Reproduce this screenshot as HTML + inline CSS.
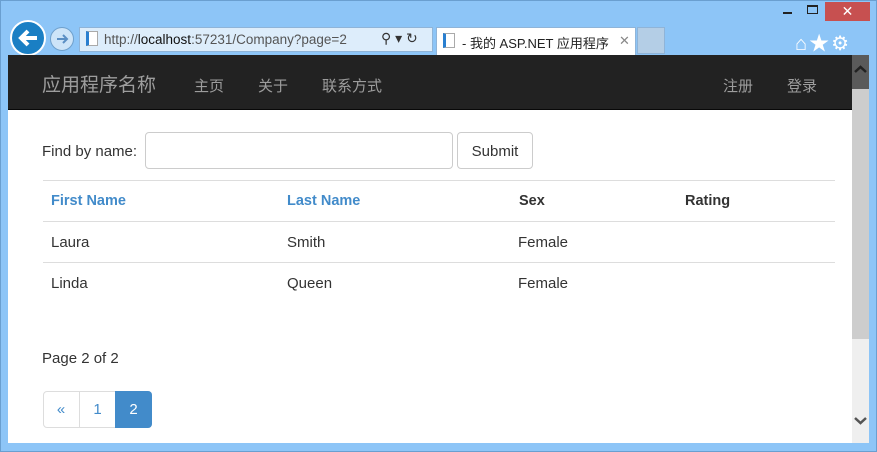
<!DOCTYPE html>
<html><head><meta charset="utf-8"><style>
*{margin:0;padding:0;box-sizing:border-box}
body{width:877px;height:452px;background:#8dc5f7;position:relative;overflow:hidden;font-family:"Liberation Sans","Noto Sans CJK SC",sans-serif;font-size:15px;color:#333}
.a{position:absolute}
.cn{font-family:"Liberation Sans","Noto Sans CJK SC","Microsoft YaHei",sans-serif}
</style></head><body>
<div class="a" style="left:0;top:0;width:877px;height:452px;border:1px solid #6a9fd0"></div>
<div class="a" style="left:783px;top:12px;width:9px;height:2px;background:#222"></div>
<div class="a" style="left:807px;top:5px;width:11px;height:9px;border:1px solid #222;border-top-width:2px"></div>
<div class="a" style="left:825px;top:2px;width:45px;height:19px;background:#c75050;color:#fff;text-align:center;font-size:14px;line-height:19px">✕</div>
<div class="a" style="left:10px;top:20px;width:36px;height:36px;border-radius:50%;background:#1a7fc4;border:2px solid #fff"></div>
<svg class="a" style="left:10px;top:20px" width="36" height="36"><path d="M27 18H11M18 11l-7 7 7 7" stroke="#fff" stroke-width="4" fill="none"/></svg>
<div class="a" style="left:50px;top:27px;width:24px;height:24px;border-radius:50%;border:1px solid #6fa0cc;background:#cde4f8"></div>
<svg class="a" style="left:50px;top:27px" width="24" height="24"><path d="M7 12h10M13 8l4 4-4 4" stroke="#5b8fc4" stroke-width="2" fill="none"/></svg>
<div class="a" style="left:79px;top:27px;width:354px;height:25px;background:#ddedfb;border:1px solid #8fb4d8"></div>
<div class="a" style="left:86px;top:31px;width:12px;height:15px;background:#fff;border:1px solid #aaa;border-left:3px solid #2a7fd0"></div>
<div class="a" style="left:104px;top:32px;font-size:13.5px;color:#555">http://<span style="color:#111">localhost</span>:57231/Company?page=2</div>
<div class="a" style="left:381px;top:30px;font-size:14px;color:#333">⚲ ▾ ↻</div>
<div class="a" style="left:436px;top:27px;width:200px;height:28px;background:#fff;border:1px solid #8fb4d8;border-bottom:none"></div>
<div class="a" style="left:443px;top:33px;width:12px;height:15px;background:#fff;border:1px solid #aaa;border-left:3px solid #2a7fd0"></div>
<div class="a cn" style="left:462px;top:33px;font-size:13px;color:#222">- 我的 ASP.NET 应用程序</div>
<div class="a" style="left:619px;top:33px;font-size:13px;color:#888">✕</div>
<div class="a" style="left:637px;top:27px;width:28px;height:27px;background:#b4cee6;border:1px solid #8fb4d8"></div>
<div class="a" style="left:795px;top:27px;font-size:20px;color:#fff;letter-spacing:2px">⌂★⚙</div>
<div class="a" style="left:8px;top:55px;width:844px;height:388px;background:#fff"></div>
<div class="a" style="left:8px;top:55px;width:844px;height:55px;background:#222;border-bottom:1px solid #080808"></div>
<div class="a cn" style="left:42px;top:70px;font-size:19px;color:#9d9d9d">应用程序名称</div>
<div class="a cn" style="left:194px;top:75px;font-size:15px;color:#9d9d9d">主页</div>
<div class="a cn" style="left:258px;top:75px;font-size:15px;color:#9d9d9d">关于</div>
<div class="a cn" style="left:322px;top:75px;font-size:15px;color:#9d9d9d">联系方式</div>
<div class="a cn" style="left:723px;top:75px;font-size:15px;color:#9d9d9d">注册</div>
<div class="a cn" style="left:787px;top:75px;font-size:15px;color:#9d9d9d">登录</div>
<div class="a" style="left:852px;top:55px;width:17px;height:388px;background:#efefef"></div>
<div class="a" style="left:852px;top:55px;width:17px;height:34px;background:#5a5a5a"></div>
<svg class="a" style="left:852px;top:63px" width="17" height="12"><path d="M3 9l5.5-5 5.5 5" stroke="#222" stroke-width="2.5" fill="none"/></svg>
<div class="a" style="left:852px;top:89px;width:17px;height:250px;background:#cdcdcd"></div>
<svg class="a" style="left:852px;top:415px" width="17" height="12"><path d="M3 3l5.5 5 5.5-5" stroke="#555" stroke-width="2.5" fill="none"/></svg>
<div class="a" style="left:42px;top:143px">Find by name:</div>
<div class="a" style="left:145px;top:132px;width:308px;height:37px;border:1px solid #ccc;border-radius:4px"></div>
<div class="a" style="left:457px;top:132px;width:76px;height:37px;border:1px solid #ccc;border-radius:4px;text-align:center;line-height:37px">Submit</div>
<div class="a" style="left:43px;top:180px;width:792px;height:1px;background:#ddd"></div>
<div class="a" style="left:43px;top:221px;width:792px;height:1px;background:#ddd"></div>
<div class="a" style="left:43px;top:262px;width:792px;height:1px;background:#ddd"></div>
<div class="a" style="left:51px;top:193px;font-weight:bold;color:#428bca;font-size:14.5px">First Name</div>
<div class="a" style="left:287px;top:193px;font-weight:bold;color:#428bca;font-size:14.5px">Last Name</div>
<div class="a" style="left:519px;top:193px;font-weight:bold;font-size:14.5px">Sex</div>
<div class="a" style="left:685px;top:193px;font-weight:bold;font-size:14.5px">Rating</div>
<div class="a" style="left:51px;top:234px">Laura</div>
<div class="a" style="left:287px;top:234px">Smith</div>
<div class="a" style="left:518px;top:234px">Female</div>
<div class="a" style="left:51px;top:275px">Linda</div>
<div class="a" style="left:287px;top:275px">Queen</div>
<div class="a" style="left:518px;top:275px">Female</div>
<div class="a" style="left:42px;top:350px">Page 2 of 2</div>
<div class="a" style="left:43px;top:391px;width:109px;height:37px;border:1px solid #ddd;border-radius:4px"></div>
<div class="a" style="left:79px;top:391px;width:1px;height:37px;background:#ddd"></div>
<div class="a" style="left:43px;top:401px;width:36px;text-align:center;color:#428bca">«</div>
<div class="a" style="left:80px;top:401px;width:35px;text-align:center;color:#428bca">1</div>
<div class="a" style="left:115px;top:391px;width:37px;height:37px;background:#428bca;border-radius:0 4px 4px 0;color:#fff;text-align:center;line-height:38px">2</div>
</body></html>
